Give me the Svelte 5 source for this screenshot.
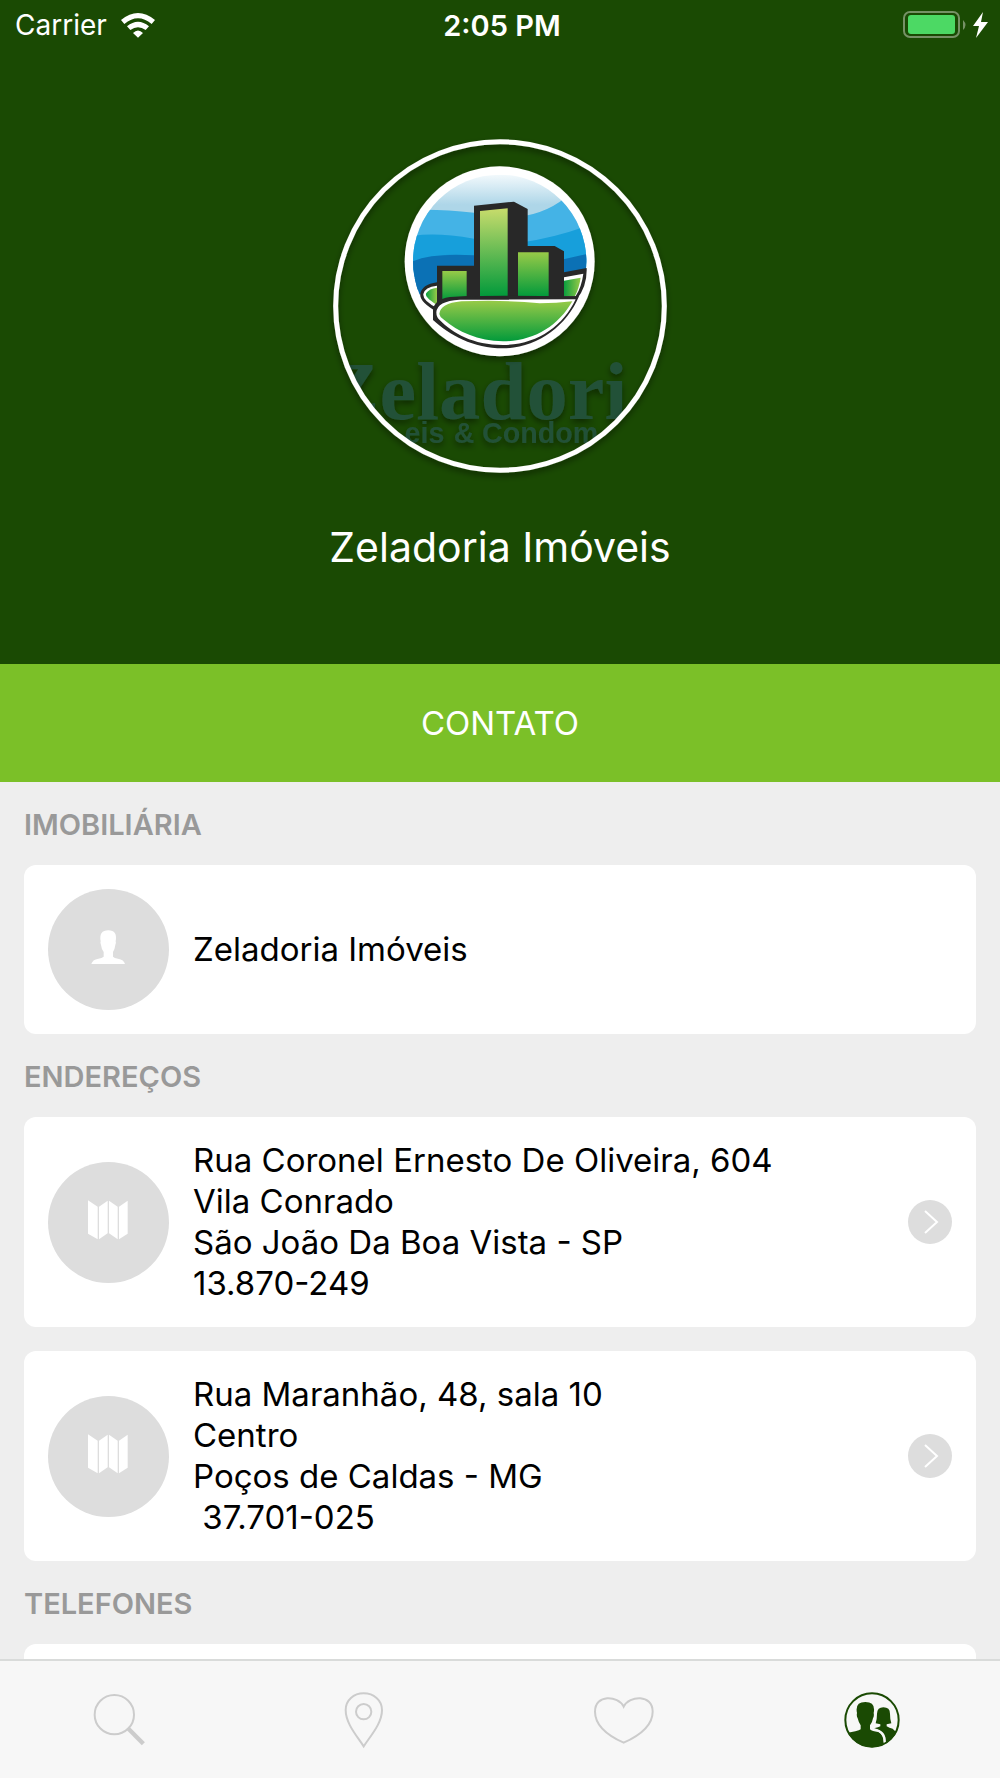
<script>
  const addresses = [
    ['Rua Coronel Ernesto De Oliveira, 604', 'Vila Conrado', 'São João Da Boa Vista - SP', '13.870-249'],
    ['Rua Maranhão, 48, sala 10', 'Centro', 'Poços de Caldas - MG', ' 37.701-025'],
  ];
</script>

{#snippet mapIcon()}
  <svg class="badge" viewBox="145 186 363 363" aria-hidden="true">
    <circle cx="326.500" cy="367.500" r="181.500" fill="#ddd" />
    <path fill="#fff" d="M265 301l29 19v98l-29-17zM298 320l26-18v98l-26 18zM328 302l26 18v98l-26-18zM358 320l26-18v99l-26 17z" />
  </svg>
{/snippet}

<div class="app">
  <header>
    <div class="status">
      <div class="carrier">
        <span>Carrier</span>
        <svg class="wifi" viewBox="362 36 102 75" aria-hidden="true">
          <path fill="#fff" d="M362 57Q413 15 464 57L454 69Q413 34 372 69zM380 76Q413 49 446 76L436 87Q413 70 390 87zM398 96Q413 81 428 96L413 110z" />
        </svg>
      </div>
      <time>2:05 PM</time>
      <svg class="battery" viewBox="0 0 86 28" aria-label="Bateria carregando">
        <rect x="1" y="1" width="55" height="25" rx="6" fill="none" stroke="#769166" stroke-width="2" />
        <rect x="5" y="4" width="47" height="19" rx="3" fill="#4cd964" />
        <path d="M60 9q5 5 0 10z" fill="#769166" />
        <path d="M80 1L70 15h6l-3 12 12-16h-7z" fill="#fff" />
      </svg>
    </div>

    <svg class="logo" viewBox="40 27 1002 1002" role="img" aria-label="Zeladoria Imóveis & Condomínios">
      <defs>
        <clipPath id="ring"><circle cx="541" cy="528" r="488" /></clipPath>
        <clipPath id="sky"><circle cx="540" cy="394" r="260" /></clipPath>
        <linearGradient id="haze" x1="0" y1="0" x2="0" y2="1">
          <stop offset="0" stop-color="#f2f9fc" />
          <stop offset="0.600" stop-color="#aed6e8" />
        </linearGradient>
        <linearGradient id="tower" x1="0" y1="0" x2="0" y2="1">
          <stop offset="0" stop-color="#c8dc6c" />
          <stop offset="1" stop-color="#029a3b" />
        </linearGradient>
        <linearGradient id="leaf" x1="0" y1="0" x2="0" y2="1">
          <stop offset="0" stop-color="#97ca48" />
          <stop offset="1" stop-color="#029a3b" />
        </linearGradient>
        <linearGradient id="side">
          <stop offset="0" stop-color="#0b9e3e" />
          <stop offset="1" stop-color="#97ca48" />
        </linearGradient>
        <filter id="shade" x="-20%" y="-20%" width="140%" height="140%">
          <feDropShadow dx="0" dy="10" stdDeviation="10" flood-color="#000" flood-opacity="0.450" />
        </filter>
      </defs>
      <g clip-path="url(#ring)">
        <g filter="url(#shade)" fill="#245137">
          <text class="brand" x="14" y="867">Zeladori</text>
          <text class="tagline" x="374" y="940" text-anchor="end">eis</text>
          <text class="tagline" x="402" y="940">&amp;</text>
          <text class="tagline" x="487" y="940">Condom</text>
        </g>
      </g>
      <circle cx="540" cy="394" r="285" fill="#fff" filter="url(#shade)" />
      <g clip-path="url(#sky)">
        <rect x="280" y="134" width="520" height="150" fill="url(#haze)" />
        <path fill="#44b3e6" d="M270 240Q360 236 463 248L540 265Q660 265 735 205L810 200V420H270z" />
        <path fill="#179fdb" d="M270 320Q340 305 463 326L600 338Q700 325 810 285V440H270z" />
        <path fill="#0b71b5" d="M270 398Q330 368 463 376L735 387 810 370V480H270z" />
        <path fill="#0b71b5" d="M270 450H362V470L302 495H270z" />
        <path fill="#fff" d="M280 492L302 492Q305 515 345 545L440 520 790 440H810V670H280z" />
      </g>
      <path fill="#282828" d="M352 546Q298 515 302 492 306 464 352 457V407H463V227L583 215 624 237V348H705L733 364V427L801 414Q803 470 770 510L352 560z" />
      <path fill="#fff" d="M352 534Q308 512 311 492 315 471 352 467zM733 442L791 431Q786 470 768 499H733z" />
      <path fill="url(#side)" d="M352 525Q312 500 320 489 328 476 352 473z" />
      <path fill="url(#side)" d="M733 452L783 443Q778 475 766 498H733z" />
      <path fill="url(#tower)" d="M481 243L564 235V498H481z" />
      <path fill="url(#leaf)" d="M368 423H441V499L368 510z" />
      <path fill="url(#leaf)" d="M595 367H687V499H595z" />
      <path fill="#282828" d="M340 540Q345 502 405 500 480 495 778 499C740 590 650 655 550 655 460 655 390 615 340 570z" />
      <path fill="#fff" d="M350 547Q352 513 420 509 500 508 768 508C730 590 650 645 550 645 460 645 400 610 360 570Q350 562 350 547z" />
      <path fill="url(#leaf)" d="M359 552Q361 520 425 514 560 509 660 520 710 520 758 514C715 590 640 634 550 634 475 634 415 605 371 568Q360 560 359 552z" />
      <circle cx="541" cy="528" r="493" fill="none" stroke="#fff" stroke-width="15" filter="url(#shade)" />
    </svg>
    <h1>Zeladoria Imóveis</h1>
  </header>

  <button class="contact" type="button">CONTATO</button>

  <main>
    <h2>IMOBILIÁRIA</h2>
    <section class="card">
      <svg class="badge" viewBox="145 87 363 363" aria-hidden="true">
        <circle cx="326.500" cy="268.500" r="181.500" fill="#ddd" />
        <path fill="#fff" d="M303 244Q297 211 326 211 354 211 348 244 350 248 347 255 345 270 340 276V290Q344 294 355 296 373 299 376 312H275Q278 299 296 296 307 294 312 290V276Q306 270 304 255 301 248 303 244z" />
      </svg>
      <p>Zeladoria Imóveis</p>
    </section>

    <h2>ENDEREÇOS</h2>
    <div class="stack">
      {#each addresses as lines}
        <a class="card" href="#mapa">
          {@render mapIcon()}
          <p>{#each lines as line}<span class="line">{line}</span>{/each}</p>
          <svg class="chevron" viewBox="0 0 44 44" aria-hidden="true">
            <circle cx="22" cy="22" r="22" fill="#ddd" />
            <path d="M17 11l12 11-12 11" fill="none" stroke="#fff" stroke-width="2" />
          </svg>
        </a>
      {/each}
    </div>

    <h2>TELEFONES</h2>
    <section class="card" aria-label="Telefones">
      <span class="badge empty"></span>
    </section>
  </main>

  <nav>
    <a href="#busca" aria-label="Buscar">
      <svg viewBox="276 169 198 198">
        <circle cx="343" cy="252" r="59" />
        <path d="M383 292L430 339" stroke-width="13" />
      </svg>
    </a>
    <a href="#locais" aria-label="Mapa">
      <svg viewBox="1026 169 198 198">
        <path d="M1091 347C1070 315 1037 278 1037 238 1037 208 1061 188 1091 188S1146 208 1146 238C1146 278 1112 315 1091 347z" />
        <circle cx="1091" cy="243" r="23" />
      </svg>
    </a>
    <a href="#favoritos" aria-label="Favoritos">
      <svg viewBox="276 169 198 198">
        <path d="M371 228C354 194 285 190 285 243 285 293 340 322 371 336 402 322 458 293 458 243 458 190 388 194 371 228z" />
      </svg>
    </a>
    <a class="active" href="#contato" aria-label="Contato" aria-current="page">
      <svg viewBox="1026 169 198 198">
        <defs><clipPath id="people"><circle cx="1116" cy="268" r="82" /></clipPath></defs>
        <g class="solid" clip-path="url(#people)">
          <path d="M1071 247Q1064 214 1096 214 1128 214 1121 247 1123 256 1119 263 1117 276 1110 284V296Q1116 302 1135 304 1151 314 1151 334L1148 356H1030V309Q1075 302 1082 296V284Q1076 276 1073 263 1069 256 1071 247z" />
          <path d="M1122 293Q1136 290 1141 287V281L1127 278Q1131 266 1131 249 1132 230 1150 230 1170 230 1170 249 1170 266 1174 278L1160 281V287Q1168 292 1178 294L1192 308 1150 356 1157 334Q1158 302 1122 293z" />
        </g>
        <path class="gap" d="M1122 296Q1156 302 1154 334" />
        <circle cx="1116" cy="268" r="80" />
      </svg>
    </a>
  </nav>
</div>

<style>
  :global(body) {
    margin: 0;
  }
  .app {
    display: flex;
    flex-direction: column;
    height: 100vh;
    background: #eee;
    color: #000;
    font-family: Inter, "Liberation Sans", sans-serif;
    font-size: 33px;
  }
  header {
    display: flex;
    flex-direction: column;
    align-items: center;
    flex: none;
    padding-bottom: 92px;
    background: #1a4a03;
    color: #fff;
  }
  .status {
    display: grid;
    grid-template-columns: 1fr auto 1fr;
    align-items: center;
    align-self: stretch;
    height: 50px;
    padding: 0 11px 0 15px;
    font-size: 28px;
  }
  .carrier {
    display: flex;
    align-items: center;
    gap: 14px;
  }
  .wifi {
    width: 34px;
    height: 25px;
  }
  .status time {
    font-size: 29px;
    font-weight: 600;
  }
  .battery {
    justify-self: end;
    width: 86px;
    height: 28px;
  }
  .logo {
    width: 334px;
    height: 334px;
    margin-top: 89px;
    overflow: visible;
  }
  .brand {
    font: bold 248px "Liberation Serif", serif;
  }
  .tagline {
    font: bold 86px "Liberation Sans", sans-serif;
  }
  h1 {
    margin: 49px 0 0;
    font-size: 41px;
    font-weight: 400;
    line-height: 50px;
  }
  .contact {
    flex: none;
    height: 118px;
    border: 0;
    background: #7bc028;
    color: #fff;
    font: inherit;
  }
  main {
    flex: 1;
    min-height: 0;
    padding: 0 24px;
    overflow-y: auto;
    scrollbar-width: none;
  }
  h2 {
    margin: 0;
    padding-top: 3px;
    color: #999;
    font-size: 29px;
    font-weight: 600;
    line-height: 80px;
  }
  .stack {
    display: grid;
    gap: 24px;
  }
  .card {
    display: flex;
    align-items: center;
    gap: 24px;
    padding: 23px 24px;
    border-radius: 12px;
    background: #fff;
    color: inherit;
    text-decoration: none;
  }
  section.card {
    padding: 24px;
  }
  .badge {
    flex: none;
    width: 121px;
    height: 121px;
  }
  .empty {
    border-radius: 50%;
    background: #ddd;
  }
  .card p {
    flex: 1;
    margin: 0;
    line-height: 41px;
  }
  .line {
    display: block;
    white-space: pre-wrap;
  }
  .chevron {
    flex: none;
    width: 44px;
    height: 44px;
  }
  nav {
    display: grid;
    grid-template-columns: repeat(4, 1fr);
    flex: none;
    height: 117px;
    border-top: 2px solid #d9dbda;
    background: #f7f7f7;
  }
  nav a {
    display: grid;
    place-items: center;
    color: #ccc;
  }
  nav .active {
    color: #1a4a03;
  }
  nav svg {
    width: 66px;
    height: 66px;
    fill: none;
    stroke: currentColor;
    stroke-width: 6;
  }
  nav .solid {
    fill: currentColor;
    stroke: none;
  }
  nav .gap {
    stroke: #f7f7f7;
  }
</style>
